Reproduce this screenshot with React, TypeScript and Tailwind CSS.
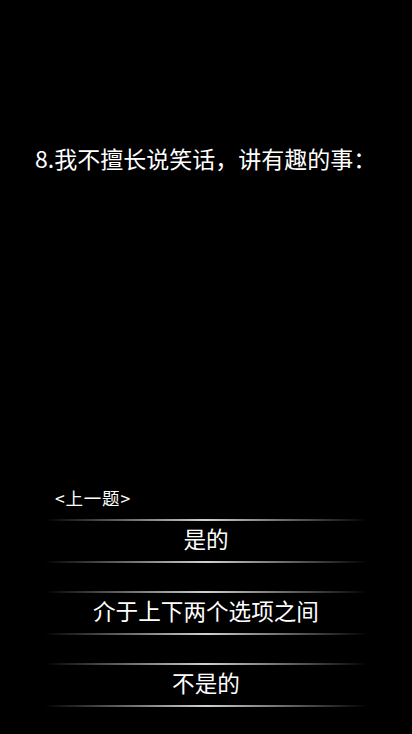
const font = { fontFamily: '"Noto Sans CJK SC", "Noto Sans", sans-serif' };

const options = ['是的', '介于上下两个选项之间', '不是的'];

function Line() {
  return <div className="h-[2px] w-full bg-gradient-to-r from-transparent via-[#d0d0d0] via-50% to-transparent" />;
}

export default function App() {
  return (
    <div className="flex h-[734px] w-[412px] flex-col bg-black text-white" style={font}>
      {/* Question */}
      <div className="pt-[143px] pl-[35px] text-[23px] leading-[30px]">8.我不擅长说笑话，讲有趣的事：</div>

      {/* Answers */}
      <div className="mt-auto pb-[27px]">
        <button className="ml-[55px] mb-[11px] text-[17.5px] leading-[20px] tracking-[0.8px] text-white">&lt;上一题&gt;</button>
        <div className="mx-[44px] flex flex-col gap-[28px]">
          {options.map((o) => (
            <div key={o}>
              <Line />
              <button className="flex h-[40px] w-full items-center justify-center pb-[4px] text-[22.6px] text-white">{o}</button>
              <Line />
            </div>
          ))}
        </div>
      </div>
    </div>
  );
}
